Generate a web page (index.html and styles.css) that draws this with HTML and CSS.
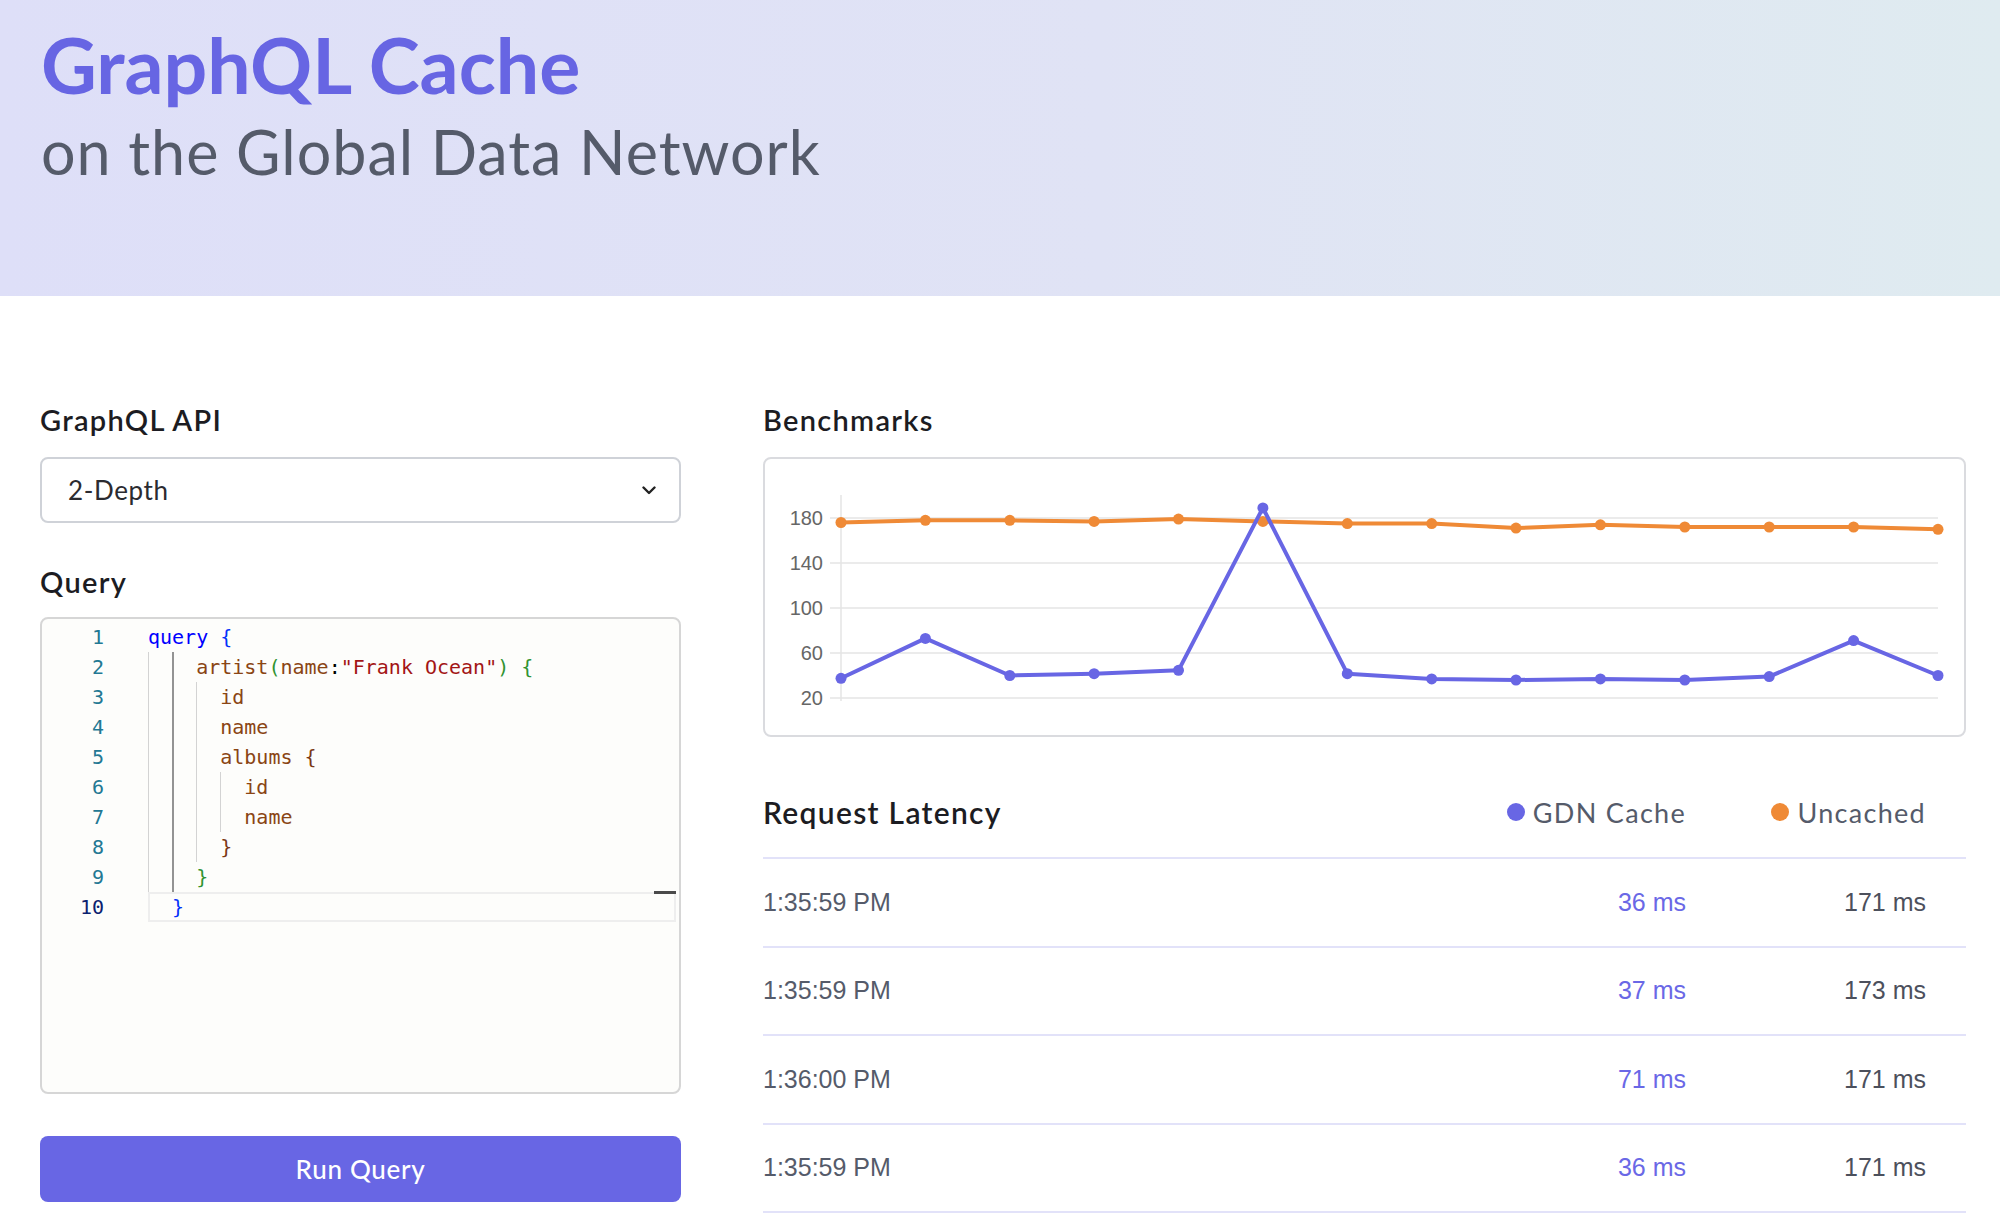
FILE: index.html
```html
<!DOCTYPE html>
<html lang="en">
<head>
<meta charset="utf-8">
<title>GraphQL Cache</title>
<link rel="stylesheet" href="styles.css">
</head>
<body>
<header class="hero">
  <h1 class="hero-title">GraphQL Cache</h1>
  <p class="hero-sub">on the Global Data Network</p>
</header>

<main class="layout">
  <section class="col-left">
    <h2 class="label">GraphQL API</h2>
    <div class="select">
      <span class="select-value">2-Depth</span>
      <svg class="chev" width="14" height="9" viewBox="0 0 14 9"><polyline points="1.5,1.5 7,7 12.5,1.5" fill="none" stroke="#222" stroke-width="2.4" stroke-linecap="round" stroke-linejoin="round"/></svg>
    </div>

    <h2 class="label label-query">Query</h2>
    <div class="editor">
      <div class="gutter">
        <div class="ln">1</div><div class="ln">2</div><div class="ln">3</div><div class="ln">4</div><div class="ln">5</div>
        <div class="ln">6</div><div class="ln">7</div><div class="ln">8</div><div class="ln">9</div><div class="ln ln-active">10</div>
      </div>
      <div class="code">
        <div class="line"><span class="kw">query</span> <span class="b1">{</span></div>
        <div class="line"><span class="ind"></span><span class="ind ind-active"></span><span class="id">artist</span><span class="b2">(</span><span class="id">name</span>:<span class="str">"Frank Ocean"</span><span class="b2">)</span> <span class="b2">{</span></div>
        <div class="line"><span class="ind"></span><span class="ind ind-active"></span><span class="ind"></span><span class="id">id</span></div>
        <div class="line"><span class="ind"></span><span class="ind ind-active"></span><span class="ind"></span><span class="id">name</span></div>
        <div class="line"><span class="ind"></span><span class="ind ind-active"></span><span class="ind"></span><span class="id">albums</span> <span class="b3">{</span></div>
        <div class="line"><span class="ind"></span><span class="ind ind-active"></span><span class="ind"></span><span class="ind"></span><span class="id">id</span></div>
        <div class="line"><span class="ind"></span><span class="ind ind-active"></span><span class="ind"></span><span class="ind"></span><span class="id">name</span></div>
        <div class="line"><span class="ind"></span><span class="ind ind-active"></span><span class="ind"></span><span class="b3">}</span></div>
        <div class="line"><span class="ind"></span><span class="ind ind-active"></span><span class="b2">}</span></div>
        <div class="line line-active"><span class="sp"></span><span class="b1">}</span><span class="ruler-mark"></span></div>
      </div>
    </div>

    <button class="run">Run Query</button>
  </section>

  <section class="col-right">
    <h2 class="label">Benchmarks</h2>
    <div class="chart">
      <svg class="chart-svg" width="1199" height="276" viewBox="765 459 1199 276">
        <g stroke="#e4e4e4" stroke-width="1.5">
          <line x1="830" y1="518" x2="1938" y2="518"/>
          <line x1="830" y1="563" x2="1938" y2="563"/>
          <line x1="830" y1="608" x2="1938" y2="608"/>
          <line x1="830" y1="653" x2="1938" y2="653"/>
          <line x1="830" y1="698" x2="1938" y2="698"/>
          <line x1="841" y1="495" x2="841" y2="701"/>
        </g>
        <g class="ticks" font-family="Liberation Sans, Arial, sans-serif" font-size="20" fill="#666" text-anchor="end">
          <text x="823" y="525">180</text>
          <text x="823" y="570">140</text>
          <text x="823" y="615">100</text>
          <text x="823" y="660">60</text>
          <text x="823" y="705">20</text>
        </g>
        <g fill="#ef8a36">
          <polyline fill="none" stroke="#ef8a36" stroke-width="4" stroke-linejoin="round" points="841,522.5 925.4,520.3 1009.8,520.3 1094.1,521.4 1178.5,519.1 1262.9,521.4 1347.3,523.6 1431.7,523.6 1516,528.1 1600.4,524.8 1684.8,527 1769.2,527 1853.6,527 1938,529.3"/>
          <circle cx="841" cy="522.5" r="5.5"/><circle cx="925.4" cy="520.3" r="5.5"/><circle cx="1009.8" cy="520.3" r="5.5"/><circle cx="1094.1" cy="521.4" r="5.5"/><circle cx="1178.5" cy="519.1" r="5.5"/><circle cx="1262.9" cy="521.4" r="5.5"/><circle cx="1347.3" cy="523.6" r="5.5"/><circle cx="1431.7" cy="523.6" r="5.5"/><circle cx="1516" cy="528.1" r="5.5"/><circle cx="1600.4" cy="524.8" r="5.5"/><circle cx="1684.8" cy="527" r="5.5"/><circle cx="1769.2" cy="527" r="5.5"/><circle cx="1853.6" cy="527" r="5.5"/><circle cx="1938" cy="529.3" r="5.5"/>
        </g>
        <g fill="#6866e4">
          <polyline fill="none" stroke="#6866e4" stroke-width="4" stroke-linejoin="round" points="841,678.3 925.4,638.4 1009.8,675.5 1094.1,673.7 1178.5,670.3 1262.9,507.9 1347.3,673.7 1431.7,678.9 1516,680 1600.4,678.9 1684.8,680 1769.2,676.6 1853.6,640.6 1938,675.5"/>
          <circle cx="841" cy="678.3" r="5.5"/><circle cx="925.4" cy="638.4" r="5.5"/><circle cx="1009.8" cy="675.5" r="5.5"/><circle cx="1094.1" cy="673.7" r="5.5"/><circle cx="1178.5" cy="670.3" r="5.5"/><circle cx="1262.9" cy="507.9" r="5.5"/><circle cx="1347.3" cy="673.7" r="5.5"/><circle cx="1431.7" cy="678.9" r="5.5"/><circle cx="1516" cy="680" r="5.5"/><circle cx="1600.4" cy="678.9" r="5.5"/><circle cx="1684.8" cy="680" r="5.5"/><circle cx="1769.2" cy="676.6" r="5.5"/><circle cx="1853.6" cy="640.6" r="5.5"/><circle cx="1938" cy="675.5" r="5.5"/>
        </g>
      </svg>
    </div>

    <div class="latency">
      <div class="lat-head">
        <h2 class="label lat-title">Request Latency</h2>
        <div class="cell-gdn legend"><span class="dot dot-gdn"></span>GDN Cache</div>
        <div class="cell-unc legend"><span class="dot dot-unc"></span>Uncached</div>
      </div>
      <div class="row"><span class="time">1:35:59 PM</span><span class="cell-gdn ms-gdn">36 ms</span><span class="cell-unc ms-unc">171 ms</span></div>
      <div class="row"><span class="time">1:35:59 PM</span><span class="cell-gdn ms-gdn">37 ms</span><span class="cell-unc ms-unc">173 ms</span></div>
      <div class="row"><span class="time">1:36:00 PM</span><span class="cell-gdn ms-gdn">71 ms</span><span class="cell-unc ms-unc">171 ms</span></div>
      <div class="row"><span class="time">1:35:59 PM</span><span class="cell-gdn ms-gdn">36 ms</span><span class="cell-unc ms-unc">171 ms</span></div>
    </div>
  </section>
</main>
</body>
</html>
```

FILE: styles.css
```css
* { box-sizing: border-box; }

html, body {
  margin: 0;
  padding: 0;
  background: #ffffff;
  font-family: "Lato", "Noto Sans", sans-serif;
  color: #1c1c22;
}

.hero {
  height: 296px;
  padding: 19px 0 0 41px;
  background: linear-gradient(90deg, #dedff8 0%, #e0e3f5 55%, #dfebf0 100%);
}

.hero-title {
  margin: 0;
  font-size: 77px;
  line-height: 90px;
  font-weight: 700;
  color: #6765e3;
}

.hero-sub {
  margin: 7px 0 0 0;
  font-size: 61px;
  line-height: 72px;
  font-weight: 400;
  letter-spacing: 1px;
  color: #555b6a;
}

.layout {
  display: grid;
  grid-template-columns: 641px 1fr;
  column-gap: 82px;
  padding: 106px 34px 0 40px;
}

.label {
  margin: 0;
  font-size: 29px;
  line-height: 36px;
  font-weight: 600;
  letter-spacing: 1.3px;
  color: #1c1c22;
}

.select {
  margin-top: 19px;
  height: 66px;
  border: 2px solid #cfd2d8;
  border-radius: 8px;
  display: flex;
  align-items: center;
  justify-content: space-between;
  padding: 0 23px 0 26px;
  background: #fff;
}

.select-value {
  font-size: 26px;
  letter-spacing: 0.6px;
  color: #2b2b30;
}

.label-query { margin-top: 41px; }

.editor {
  margin-top: 17px;
  height: 477px;
  border: 2px solid #d6d6d6;
  border-radius: 8px;
  background: #fdfdfb;
  display: flex;
  padding-top: 3px;
  font-family: "DejaVu Sans Mono", "Liberation Mono", monospace;
  font-size: 20px;
}

.gutter {
  width: 62px;
  text-align: right;
  color: #237893;
}

.ln { height: 30px; line-height: 30px; }
.ln-active { color: #0b216f; }

.code {
  flex: 1;
  margin: 0 3px 0 44px;
  color: #000;
}

.line {
  position: relative;
  height: 30px;
  line-height: 30px;
  white-space: pre;
}

.ind, .sp {
  display: inline-block;
  width: 2ch;
  height: 30px;
  vertical-align: top;
}

.ind { box-shadow: inset 1px 0 0 #d3d3d3; }
.ind-active { box-shadow: inset 2px 0 0 #939393; }

.line-active {
  box-shadow: inset 0 0 0 2px #eeeeee;
}

.ruler-mark {
  position: absolute;
  right: 0;
  top: -1px;
  width: 22px;
  height: 3px;
  background: #4a4a4a;
}

.kw { color: #0000ff; }
.b1 { color: #0431fa; }
.b2 { color: #319331; }
.b3 { color: #7b3814; }
.id { color: #8a4514; }
.str { color: #a31515; }

.run {
  display: block;
  width: 100%;
  margin-top: 42px;
  height: 66px;
  border: none;
  border-radius: 8px;
  background: #6866e4;
  color: #fff;
  font-family: "Lato", "Noto Sans", sans-serif;
  font-size: 26px;
  font-weight: 500;
  letter-spacing: 0.7px;
}

.chart {
  margin-top: 19px;
  height: 280px;
  border: 2px solid #dadbdf;
  border-radius: 8px;
  background: #fff;
  overflow: hidden;
}

.chart-svg { display: block; }

.latency { margin-top: 55px; }

.lat-head {
  display: flex;
  align-items: center;
  padding: 0 40px 25px 0;
  border-bottom: 2px solid #e2e2f9;
}

.lat-title {
  flex: 1;
  font-size: 30px;
  line-height: 40px;
}

.legend {
  display: flex;
  align-items: center;
  font-size: 27px;
  letter-spacing: 1.3px;
  color: #555b6a;
}

.cell-gdn { text-align: right; }
.cell-unc { width: 240px; text-align: right; }
.legend.cell-unc { justify-content: flex-end; }

.dot {
  display: inline-block;
  width: 18px;
  height: 18px;
  border-radius: 50%;
  margin-right: 8px;
}
.dot-gdn { background: #6866e4; }
.dot-unc { background: #ef8a36; }

.row {
  display: flex;
  align-items: center;
  height: 88.5px;
  padding: 0 40px 0 0;
  border-bottom: 2px solid #e2e2f9;
  font-family: "Liberation Sans", Arial, sans-serif;
  font-size: 25px;
}

.time { flex: 1; color: #555b6a; }
.ms-gdn { color: #6a68e6; }
.ms-unc { color: #4c505c; }
```
